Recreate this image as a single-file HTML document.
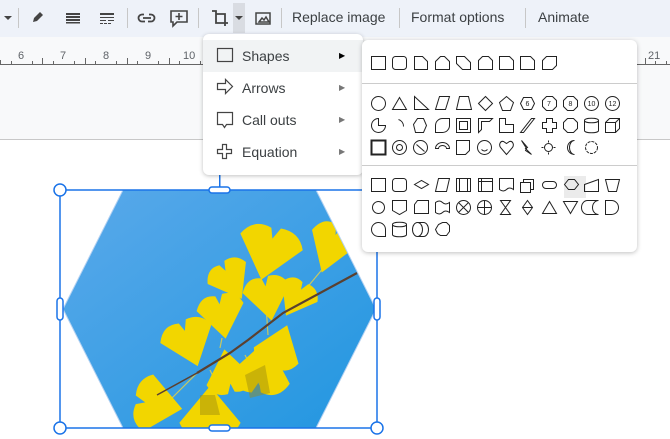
<!DOCTYPE html>
<html><head><meta charset="utf-8"><style>
*{margin:0;padding:0;box-sizing:border-box}
body{width:670px;height:439px;overflow:hidden;background:#fff;font-family:"Liberation Sans",sans-serif;position:relative}
.tb{position:absolute;left:0;top:0;width:670px;height:37px;background:#eef2f9}
.rul{position:absolute;left:0;top:37px;width:670px;height:103px;background:#f8f9fa;border-bottom:1px solid #c8c8c8}
.t{position:absolute;top:9px;font-size:14px;color:#3c4043}
.sep{position:absolute;top:8px;width:1px;height:20px;background:#c7c7c7}
.menu{position:absolute;left:203px;top:34px;width:160px;height:141px;background:#fff;border-radius:6px;box-shadow:0 1px 4px rgba(0,0,0,.25)}
.mi{position:absolute;left:39px;font-size:14px;color:#3c4043}
.ar{position:absolute;left:136px;font-size:8px;color:#777}
.sub{position:absolute;left:362px;top:40px;width:275px;height:212px;background:#fff;border-radius:6px;box-shadow:0 1px 5px rgba(0,0,0,.25)}
</style></head><body>
<div class="tb"></div>
<svg style="position:absolute;left:0;top:0" width="360" height="37">
<path d="M4 16l4 4 4-4z" fill="#444"/>
<rect x="18" y="8" width="1" height="20" fill="#c7c7c7"/>
<path d="M33 22l1-4 6-6 3 3-6 6z" fill="#444"/>
<g fill="#444"><rect x="66" y="13" width="14" height="2"/><rect x="66" y="16" width="14" height="2"/><rect x="66" y="19" width="14" height="2"/><rect x="66" y="22" width="14" height="1.5"/></g>
<g fill="#444"><rect x="100" y="13" width="14" height="2"/><rect x="100" y="17" width="14" height="1"/><rect x="100" y="20" width="6" height="1"/><rect x="108" y="20" width="6" height="1"/><rect x="100" y="23" width="3" height="1"/><rect x="104" y="23" width="3" height="1"/><rect x="108" y="23" width="3" height="1"/></g>
<rect x="127" y="8" width="1" height="20" fill="#c7c7c7"/>
<path d="M144 14.5h-2a3.5 3.5 0 0 0 0 7h3M149 14.5h2a3.5 3.5 0 0 1 0 7h-3M143 18h8" fill="none" stroke="#444" stroke-width="1.8"/>
<path d="M171 11h16v11h-10l-4 4v-4h-2z" fill="none" stroke="#444" stroke-width="1.6"/><path d="M179 13v7M175.5 16.5h7" stroke="#444" stroke-width="1.6"/>
<rect x="198" y="8" width="1" height="20" fill="#c7c7c7"/>
<path d="M212 11h4v12h12M216 14h9v12" fill="none" stroke="#444" stroke-width="1.8"/>
<rect x="233" y="3" width="12" height="30" fill="#d9dce2"/>
<path d="M235 16l4 4 4-4z" fill="#444"/>
<path d="M256 13h14v11h-14z M259 22l3-4 2 2 2-3 3 5z" fill="none" stroke="#444" stroke-width="1.5"/>
<rect x="281" y="8" width="1" height="20" fill="#c7c7c7"/>
</svg>
<div class="t" style="left:292px">Replace image</div>
<div class="sep" style="left:399px"></div>
<div class="t" style="left:411px">Format options</div>
<div class="sep" style="left:525px"></div>
<div class="t" style="left:538px">Animate</div>
<div class="rul"></div>
<svg style="position:absolute;left:0;top:37px" width="670" height="35">
<rect x="0" y="27" width="670" height="1" fill="#666"/>
<g fill="#666">
<rect x="0" y="23" width="1" height="4"/><rect x="11" y="24" width="1" height="3"/><rect x="32" y="24" width="1" height="3"/><rect x="42" y="21" width="1" height="6"/><rect x="53" y="24" width="1" height="3"/><rect x="74" y="24" width="1" height="3"/><rect x="85" y="21" width="1" height="6"/><rect x="95" y="24" width="1" height="3"/><rect x="116" y="24" width="1" height="3"/><rect x="127" y="21" width="1" height="6"/><rect x="137" y="24" width="1" height="3"/><rect x="158" y="24" width="1" height="3"/><rect x="169" y="21" width="1" height="6"/><rect x="179" y="24" width="1" height="3"/><rect x="200" y="24" width="1" height="3"/>
<rect x="645" y="21" width="1" height="6"/><rect x="655" y="24" width="1" height="3"/><rect x="666" y="24" width="1" height="3"/>
</g>
<g font-size="11" fill="#5f6368" font-family="Liberation Sans">
<text x="18" y="22">6</text><text x="60" y="22">7</text><text x="103" y="22">8</text><text x="145" y="22">9</text><text x="183" y="22">10</text><text x="648" y="22">21</text></g>
</svg>
<svg style="position:absolute;left:0;top:170px" width="400" height="269">
<defs><clipPath id="h"><polygon points="123,20 316,20 376,139 316,258 123,258 63,139"/></clipPath>
<linearGradient id="g" x1="0" y1="0" x2="1" y2="1"><stop offset="0" stop-color="#5aa9ea"/><stop offset="1" stop-color="#2196e0"/></linearGradient>
<path id="lf" d="M0 15L-17 -8Q-12 -19 -2 -16L0 -10L3 -17Q13 -18 17 -8Z" fill="#f2d600"/></defs>
<g clip-path="url(#h)">
<rect x="60" y="20" width="320" height="240" fill="url(#g)"/>
<path d="M265 120L268 165M330 90L305 120M222 168L220 178M170 230L197 203M222 225L210 200M260 215L245 185" stroke="#c8c860" stroke-width="1.2"/>
<use href="#lf" transform="translate(268,85) rotate(15) scale(1.9,1.7)"/>
<use href="#lf" transform="translate(232,112) rotate(-30) scale(1.3)"/>
<use href="#lf" transform="translate(330,80) rotate(20) scale(1.4,1.6)"/>
<use href="#lf" transform="translate(268,130) rotate(-10) scale(1.4)"/>
<use href="#lf" transform="translate(295,130) rotate(30) scale(1.2)"/>
<use href="#lf" transform="translate(190,175) rotate(-20) scale(1.6,1.5)"/>
<use href="#lf" transform="translate(222,148) rotate(-10) scale(1.4)"/>
<use href="#lf" transform="translate(228,200) rotate(170) scale(1.4)"/>
<use href="#lf" transform="translate(262,195) rotate(-170) scale(1.8,1.7)"/>
<use href="#lf" transform="translate(280,175) rotate(200) scale(1.4)"/>
<use href="#lf" transform="translate(160,235) rotate(-80) scale(1.7,1.5)"/>
<use href="#lf" transform="translate(210,240) rotate(180) scale(1.8,1.6)"/>
<path d="M197 203L230 183L248 170L283 143L357 103" stroke="#5a4030" stroke-width="2.2" fill="none"/>
<path d="M197 203L157 225" stroke="#5a4030" stroke-width="1.5" fill="none"/>
<g fill="#9a8a10" opacity=".45"><path d="M245 205l20 -10 5 28 -20 5z"/><path d="M200 225l15 0 5 20 -20 0z"/></g>
</g>
<polygon points="123,20 316,20 376,139 316,258 123,258 63,139" fill="none" stroke="#b3d1f2" stroke-width="1"/>
<rect x="60" y="20" width="317" height="238" fill="none" stroke="#1a73e8" stroke-width="1.5"/>
<rect x="219" y="0" width="1.5" height="20" fill="#1a73e8"/>
<g fill="#fff" stroke="#1a73e8" stroke-width="1.5">
<circle cx="60" cy="20" r="6"/><circle cx="377" cy="20" r="6"/><circle cx="60" cy="258" r="6"/><circle cx="377" cy="258" r="6"/>
<rect x="209" y="17" width="21" height="6" rx="3"/><rect x="209" y="255" width="21" height="6" rx="3"/>
<rect x="57" y="128" width="6" height="22" rx="3"/><rect x="374" y="128" width="6" height="22" rx="3"/>
</g></svg>
<div class="menu">
<div style="position:absolute;left:0;top:6px;width:160px;height:32px;background:#f1f3f4"></div>
<svg style="position:absolute;left:0;top:0" width="40" height="141" fill="none" stroke="#444" stroke-width="1.2">
<rect x="14.5" y="14.5" width="15" height="13"/>
<path d="M14.5 49.5h8v-4l7 7-7 7v-4h-8z"/>
<path d="M14.5 78.5h15v12h-6l-2 3-2-3h-5z"/>
<path d="M19.5 110.5h4v5h5v4h-5v5h-4v-5h-5v-4h5z"/>
</svg>
<div class="mi" style="top:14px">Shapes</div>
<div class="mi" style="top:46px">Arrows</div>
<div class="mi" style="top:78px">Call outs</div>
<div class="mi" style="top:110px">Equation</div>
<div class="ar" style="top:17px;color:#000">▶</div><div class="ar" style="top:49px">▶</div><div class="ar" style="top:81px">▶</div><div class="ar" style="top:113px">▶</div>
</div>
<div class="sub">
<svg width="275" height="212" fill="none" stroke="#222" stroke-width="1">
<rect x="0" y="43" width="275" height="1" fill="#ccc" stroke="none"/>
<rect x="0" y="125" width="275" height="1" fill="#ccc" stroke="none"/>
<rect x="202" y="136" width="22" height="22" fill="#ebebeb" stroke="none"/>
<g transform="translate(9.5,16.5)">
<rect x="0" y="0" width="14" height="13"/><rect x="21" y="0" width="14" height="13" rx="3"/><path d="M43 0h8l5 5v8h-13z"/><path d="M64 13v-8l5-5h4l5 5v8z"/><path d="M85 0h8l6 6v7h-8l-6-6z"/><path d="M107 13v-9l4-4h6l4 4v9z"/><path d="M128 0h10l4 4v9h-14z"/><path d="M149 13v-13h10l4 4v9z"/><path d="M171 13v-9l4-4h10v9l-4 4z"/>
</g>
<g transform="translate(9.5,56.5)">
<circle cx="7" cy="7" r="7"/><path d="M21 13l7-12 7 12z"/><path d="M43 0l14 13h-14z"/><path d="M64 13l4-13h10l-4 13z"/><path d="M85 13l3-13h9l3 13z"/><path d="M107 7l7-7 7 7-7 7z"/><path d="M128 6l7-6 7 6-3 8h-8z"/>
<path d="M149 7l3-6h8l3 6-3 6h-8z"/><path d="M171 4l4-4h6l4 4v6l-4 4h-6l-4-4z"/><path d="M192 4l4-4h6l4 4v6l-4 4h-6l-4-4z"/><circle cx="220" cy="7" r="7"/><circle cx="241" cy="7" r="7"/>
</g>
<g font-size="7" fill="#222" stroke="none" font-family="Liberation Sans" text-anchor="middle"><text x="165.5" y="66">6</text><text x="187" y="66">7</text><text x="208.5" y="66">8</text><text x="229.5" y="66">10</text><text x="250.5" y="66">12</text></g>
<g transform="translate(9.5,78.5)">
<path d="M7 0a7 7 0 1 0 7 7h-7z"/><path d="M27 1a7 7 0 0 1 5 7"/><path d="M46 0h6l3 7-3 7h-8l-2-8z"/><path d="M71 0h7v7a7 7 0 0 1-7 7h-7v-7a7 7 0 0 1 7-7z"/><rect x="85" y="0" width="14" height="14"/><rect x="88" y="3" width="8" height="8"/>
<path d="M107 14v-14h14l-3 3h-8v8z"/><path d="M128 0h6v6h8v8h-14z"/><path d="M149 14l11-14h3l-11 14z"/><path d="M175 0h6v4h4v6h-4v4h-6v-4h-4v-6h4z"/><path d="M196 0h6l4 4v6l-4 4h-6l-4-4v-6z"/><path d="M213 2v10c0 3 14 3 14 0v-10c0-3-14-3-14 0z M213 2c0 3 14 3 14 0"/><path d="M234 4h10v10h-10z M234 4l4-4h10v10l-4 4 M244 4l4-4"/>
</g>
<g transform="translate(9.5,100.5)">
<rect x="0" y="0" width="14" height="14" stroke-width="2"/><circle cx="28" cy="7" r="7"/><circle cx="28" cy="7" r="3"/><circle cx="49" cy="7" r="7"/><path d="M45 4l8 7"/><path d="M64 8a7 6 0 0 1 14 0h-3a4 3 0 0 0-8 0z"/><path d="M85 0h13v10l-4 4h-9z"/><circle cx="113" cy="7" r="7"/><path d="M110 9q3 3 6 0"/><path d="M135 14l-6-7c-2-3 0-7 3-6l3 2 3-2c3-1 5 3 3 6z"/><path d="M150 0l6 7 -2 1 6 6-6-4 1-2z"/><circle cx="177" cy="7" r="4"/><path d="M177 0v2M177 12v2M170 7h2M182 7h2"/><path d="M203 0a7 7 0 1 0 0 14a5 7 0 0 1 0-14z"/><circle cx="220" cy="7" r="6" stroke-dasharray="3 1"/>
</g>
<g transform="translate(9.5,138.5)">
<rect x="0" y="0" width="14" height="13"/><rect x="21" y="0" width="14" height="13" rx="3"/><path d="M43 6l7-4 7 4-7 4z"/><path d="M64 13l3-13h11l-3 13z"/><rect x="85" y="0" width="14" height="13"/><path d="M88 0v13M96 0v13"/><rect x="107" y="0" width="14" height="13"/><path d="M110 0v13M107 3h14"/><path d="M128 0h14v11q-4-3-7 0t-7 0z"/><path d="M149 4h10v10h-10z M152 4v-3h10v10h-3"/><rect x="171" y="3" width="14" height="7" rx="3.5"/><path d="M193 6l4-5h6l4 5-4 5h-6z"/><path d="M213 13v-7l14-5v12z"/><path d="M234 1h14l-3 12h-8z"/>
</g>
<g transform="translate(9.5,160.5)">
<circle cx="7" cy="7" r="6"/><path d="M21 0h14v10l-7 4-7-4z"/><path d="M46 0h11v13h-14v-9z"/><path d="M64 2q4-3 7 0t7 0v10q-4-3-7 0t-7 0z"/><circle cx="92" cy="7" r="7"/><path d="M87 2l10 10M97 2l-10 10"/><circle cx="113" cy="7" r="7"/><path d="M113 0v14M106 7h14"/><path d="M129 0h10l-5 7 5 7h-10l5-7z"/><path d="M156 0l-5 7 5 7 5-7z M151 7h10"/><path d="M171 13l7-12 7 12z"/><path d="M192 1h14l-7 12z"/><path d="M216 0h11a6 7 0 0 0 0 14h-11a6 7 0 0 1 0-14z"/><path d="M234 0h6a7 7 0 0 1 0 14h-6z"/>
</g>
<g transform="translate(9.5,182.5)">
<path d="M7 14a7 7 0 1 1 7-7v7z"/><path d="M21 2v10c0 3 14 3 14 0v-10c0-3-14-3-14 0z M21 2c0 3 14 3 14 0"/><path d="M46 0h6a5 7 0 0 1 0 14h-6a5 7 0 0 1 0-14z M46 0a5 7 0 0 1 0 14"/><path d="M64 7l3-5 4-2h4l3 3v6l-3 4h-6l-3-2z"/>
</g>
</svg>
</div>
</body></html>
